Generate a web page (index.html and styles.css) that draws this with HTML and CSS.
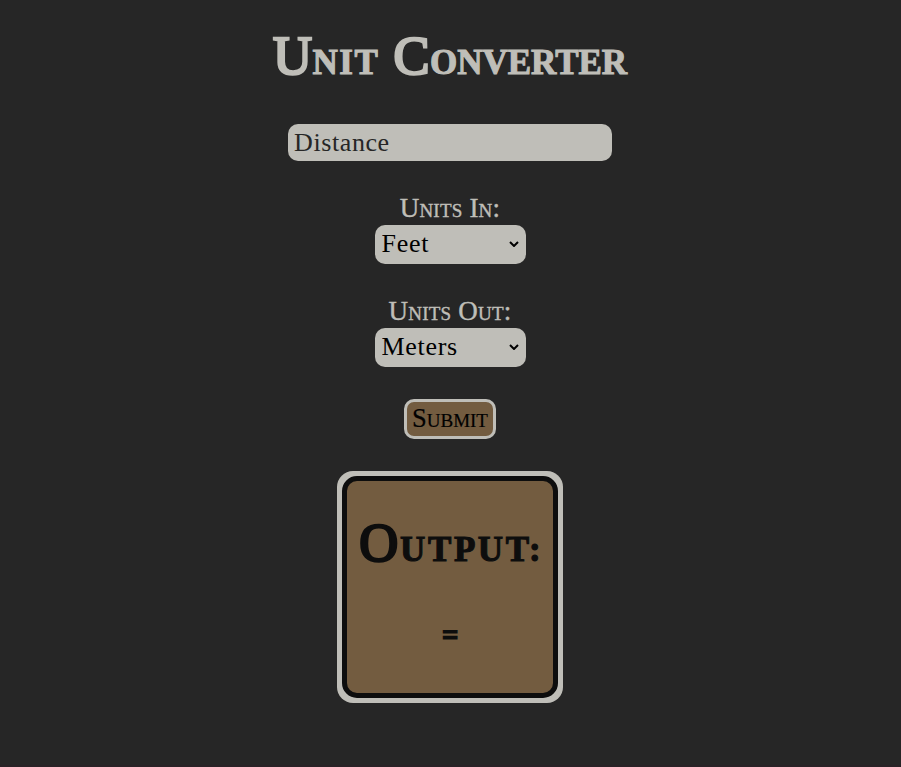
FILE: index.html
```html
<!DOCTYPE html>
<html lang="en">
<head>
<meta charset="utf-8">
<title>Unit Converter</title>
<link rel="stylesheet" href="styles.css">
</head>
<body>
<main class="converter">
  <h1 class="title">U<span class="small first">NIT</span> C<span class="small">ONVERTER</span></h1>
  <input class="distance" type="text" placeholder="Distance" aria-label="Distance">
  <label class="label" for="in">Units In:</label>
  <div class="select-wrap">
    <select class="select" id="in"><option>Feet</option><option>Meters</option></select>
    <svg class="chevron" viewBox="0 0 10 6"><path d="M1 1l4 4 4-4"/></svg>
  </div>
  <label class="label" for="out">Units Out:</label>
  <div class="select-wrap">
    <select class="select" id="out"><option>Meters</option><option>Feet</option></select>
    <svg class="chevron" viewBox="0 0 10 6"><path d="M1 1l4 4 4-4"/></svg>
  </div>
  <button class="submit" type="button">Submit</button>
  <section class="output">
    <div class="output-panel">
      <h2 class="output-title">O<span class="small">UTPUT:</span></h2>
      <p class="result">=</p>
    </div>
  </section>
</main>
</body>
</html>
```
FILE: styles.css
```css
* { box-sizing: border-box; }
body {
  margin: 0;
  height: 767px;
  overflow: hidden;
  background: #262626;
  border-bottom: 2px solid #292226;
  color: #bfbeb8;
  font-family: "Liberation Serif", serif;
}
.converter {
  display: flex;
  flex-direction: column;
  align-items: center;
  width: 900px;
  padding-top: 24px;
}
.label, .submit { font-variant: small-caps; }
.title, .output-title {
  height: 64px;
  font-size: 54px;
  font-weight: normal;
  line-height: 64px;
  white-space: nowrap;
  -webkit-text-stroke: 2.6px currentColor;
}
.title { margin: 0 0 36px; letter-spacing: 0.5px; }
.small {
  font-size: 35px;
  font-weight: bold;
  -webkit-text-stroke: 1.1px currentColor;
}
.title .small { letter-spacing: 0; }
.title .first { letter-spacing: 1.6px; }
.distance {
  width: 324px;
  height: 37px;
  padding: 0 6px;
  border: 0;
  border-radius: 10px;
  background: #bfbeb8;
  color: #262626;
  font: 26px "Liberation Serif", serif;
  letter-spacing: 0.6px;
}
.distance::placeholder { color: #262626; opacity: 1; }
.label {
  height: 32px;
  margin-top: 32px;
  font-size: 27px;
  line-height: 30px;
  letter-spacing: 0.2px;
  -webkit-text-stroke: 0.4px currentColor;
}
.select-wrap { position: relative; width: 151px; height: 39px; }
.select {
  appearance: none;
  width: 100%;
  height: 39px;
  padding: 0 7px 2px;
  border: 0;
  border-radius: 10px;
  background: #bfbeb8;
  color: #000;
  font: 26px "Liberation Serif", serif;
  letter-spacing: 0.7px;
}
.chevron {
  position: absolute;
  right: 7px;
  top: 16px;
  width: 10px;
  height: 6px;
  fill: none;
  stroke: #000;
  stroke-width: 2;
}
.submit {
  width: 92px;
  height: 40px;
  margin-top: 32px;
  padding: 0 0 2px;
  border: 3px solid #bfbeb8;
  border-radius: 10px;
  background: #735c40;
  color: #000;
  font-family: "Liberation Serif", serif;
  font-size: 26.5px;
  line-height: 32px;
  -webkit-text-stroke: 0.2px currentColor;
}
.output {
  width: 226px;
  height: 232px;
  margin-top: 32px;
  padding: 5px;
  border-radius: 16px;
  background: #bfbeb8;
}
.output-panel {
  display: flex;
  flex-direction: column;
  align-items: center;
  height: 222px;
  padding-top: 30px;
  border: 5px solid #0d0d0d;
  border-radius: 15px;
  background: #735c40;
  color: #0d0d0d;
}
.output-title { margin: 0; letter-spacing: 1.8px; }
.output-title .small { letter-spacing: 2.6px; margin-right: -2.6px; }
.result {
  margin: 30px 0 0;
  font-size: 27px;
  line-height: 61px;
  -webkit-text-stroke: 2.2px currentColor;
}
```
